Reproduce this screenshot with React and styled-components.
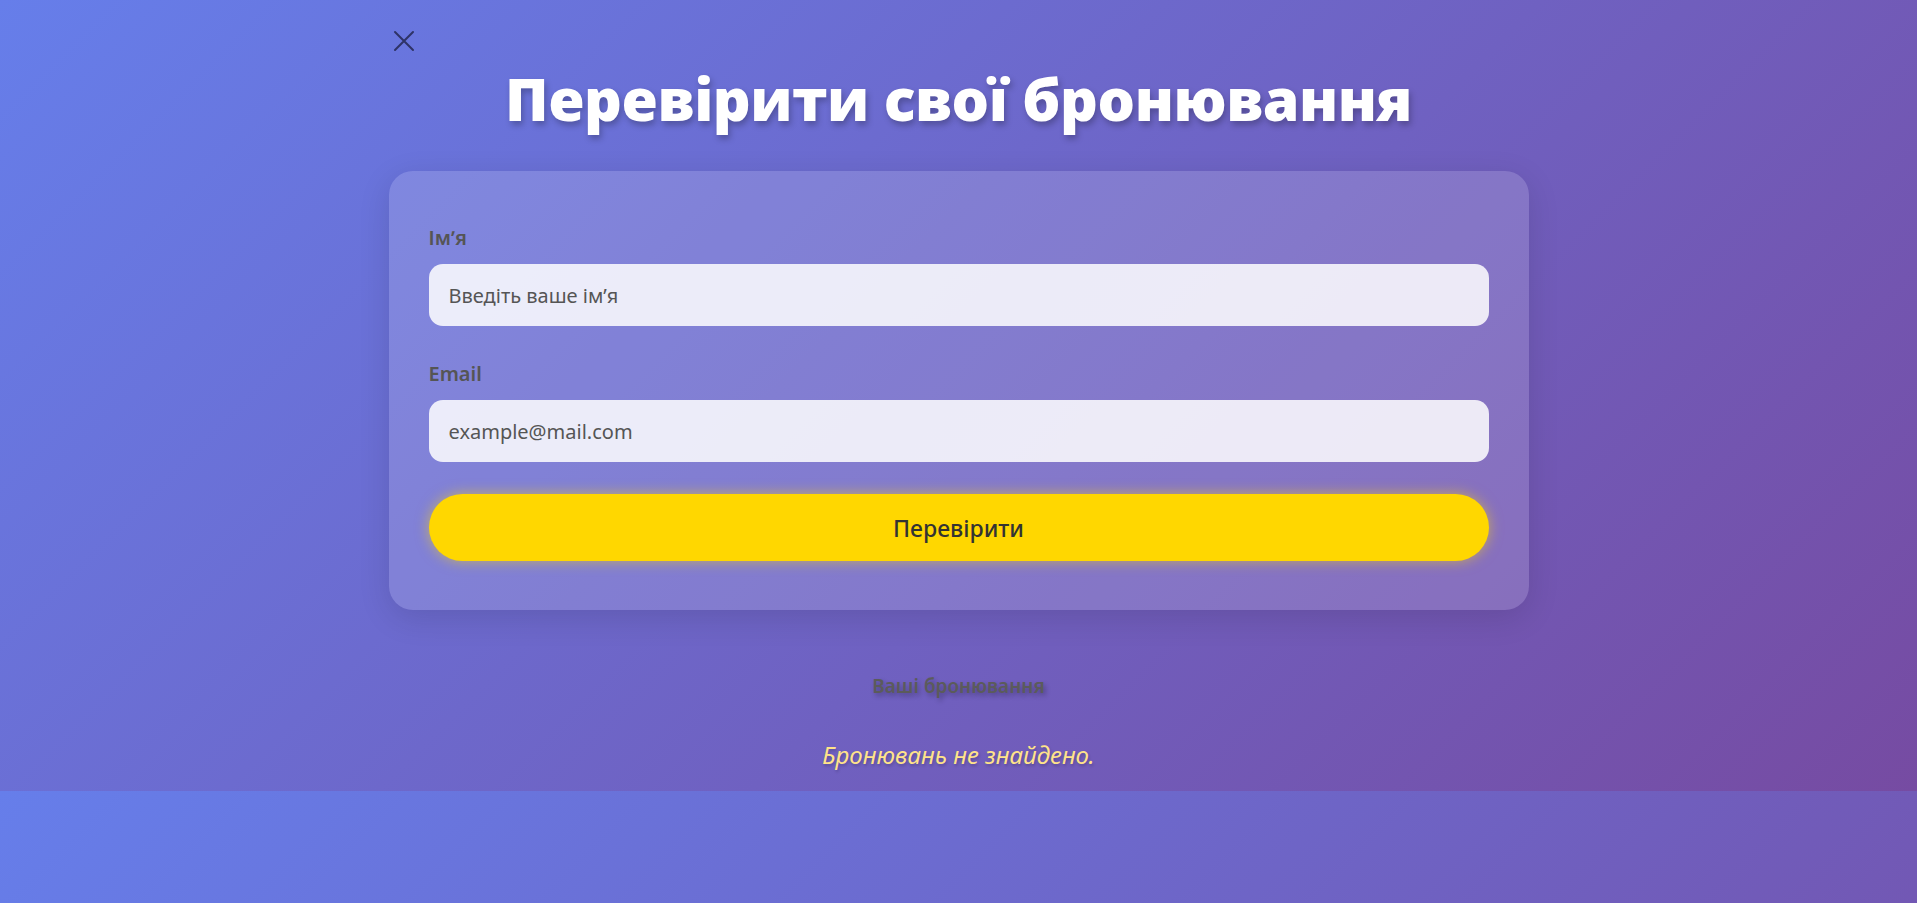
import React from "react";
import styled, { createGlobalStyle } from "styled-components";

const GlobalStyle = createGlobalStyle`
  html, body {
    margin: 0;
    padding: 0;
  }
  body {
    background: linear-gradient(135deg, #667eea 0%, #764ba2 100%);
    font-family: "Noto Sans", "Open Sans", sans-serif;
    color: #333;
  }
  * { box-sizing: border-box; }
`;

const Page = styled.main`
  height: 791px;
  padding-top: 26px;
`;

const Container = styled.div`
  width: 1140px;
  margin: 0 auto;
  display: flex;
  flex-direction: column;
`;

const CloseButton = styled.button`
  align-self: flex-start;
  width: 30px;
  height: 30px;
  padding: 0;
  border: none;
  background: transparent;
  display: flex;
  align-items: center;
  justify-content: center;
  cursor: pointer;
  color: #2e3366;
`;

const Title = styled.h1`
  margin: 2px 0 33px;
  text-align: center;
  font-family: "Open Sans", "Noto Sans", sans-serif;
  font-weight: 800;
  font-size: 59px;
  line-height: 80px;
  letter-spacing: -0.5px;
  color: #fff;
  text-shadow: 2px 4px 6px rgba(0, 0, 0, 0.25);
`;

const Card = styled.form`
  background: rgba(255, 255, 255, 0.15);
  border-radius: 24px;
  padding: 53px 40px 49px;
  box-shadow: 0 8px 32px rgba(0, 0, 0, 0.12);
  display: flex;
  flex-direction: column;
`;

const FormGroup = styled.div`
  display: flex;
  flex-direction: column;
  margin-bottom: ${(p) => p.$mb || 34}px;
`;

const Label = styled.label`
  font-size: 20px;
  font-weight: 600;
  line-height: 28px;
  color: #555;
  margin-bottom: 12px;
`;

const Input = styled.input`
  height: 62px;
  border: none;
  border-radius: 14px;
  padding: 0 20px;
  font-family: inherit;
  font-size: 20px;
  color: #333;
  background: rgba(255, 255, 255, 0.85);
  outline: none;
  &::placeholder {
    color: #555;
    opacity: 1;
  }
`;

const SubmitButton = styled.button`
  height: 67px;
  border: none;
  border-radius: 34px;
  background: #ffd700;
  box-shadow: 0 0 14px rgba(255, 215, 0, 0.55);
  font-family: inherit;
  font-size: 23px;
  font-weight: 500;
  color: #333;
  cursor: pointer;
`;

const Results = styled.section`
  display: flex;
  flex-direction: column;
  align-items: center;
  padding-top: 60px;
`;

const ResultsTitle = styled.h2`
  margin: 0;
  font-size: 19px;
  font-weight: 600;
  line-height: 32px;
  color: #5b5b5b;
  text-shadow: 2px 3px 5px rgba(0, 0, 0, 0.3);
`;

const EmptyText = styled.p`
  margin: 37px 0 0;
  font-size: 24px;
  font-style: italic;
  line-height: 32px;
  color: #ffe38a;
  text-shadow: 1px 2px 3px rgba(0, 0, 0, 0.2);
`;

export default function App() {
  return (
    <>
      <GlobalStyle />
      <Page>
        <Container>
          <CloseButton type="button" aria-label="Закрити">
            <svg width="22" height="22" viewBox="0 0 22 22" fill="none">
              <path d="M2 2 L20 20 M20 2 L2 20" stroke="currentColor" strokeWidth="2" strokeLinecap="round" />
            </svg>
          </CloseButton>
          <Title>Перевірити свої бронювання</Title>
          <Card onSubmit={(e) => e.preventDefault()}>
            <FormGroup>
              <Label htmlFor="name">Імʼя</Label>
              <Input id="name" type="text" placeholder="Введіть ваше імʼя" />
            </FormGroup>
            <FormGroup $mb={32}>
              <Label htmlFor="email">Email</Label>
              <Input id="email" type="email" placeholder="example@mail.com" />
            </FormGroup>
            <SubmitButton type="submit">Перевірити</SubmitButton>
          </Card>
          <Results>
            <ResultsTitle>Ваші бронювання</ResultsTitle>
            <EmptyText>Бронювань не знайдено.</EmptyText>
          </Results>
        </Container>
      </Page>
    </>
  );
}
